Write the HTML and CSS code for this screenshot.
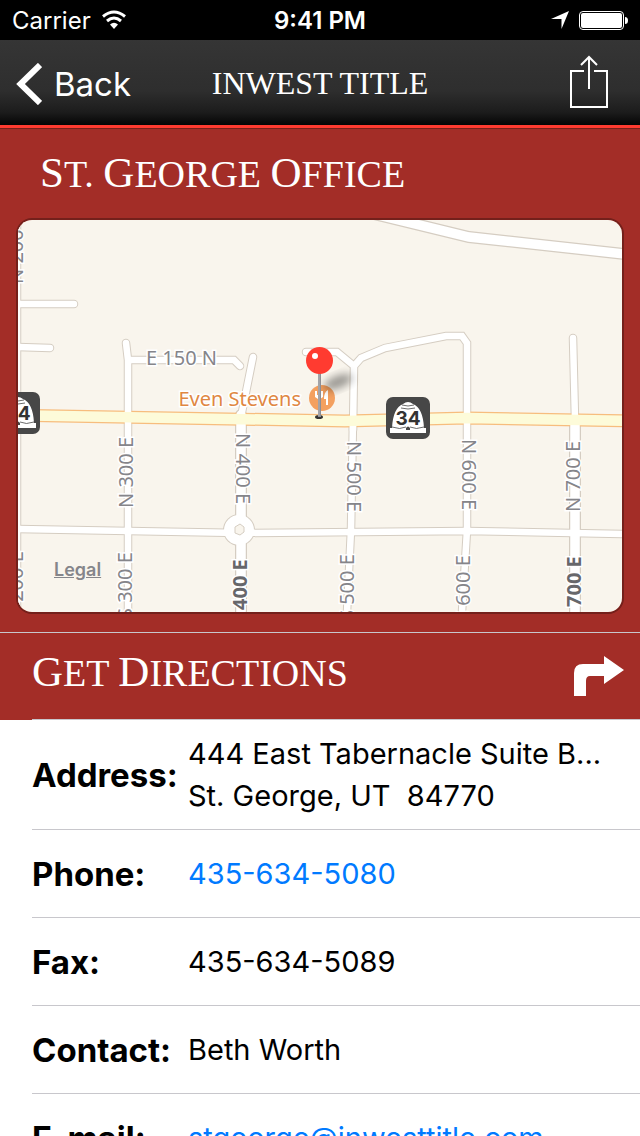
FILE: index.html
```html
<!DOCTYPE html>
<html lang="en">
<head>
    <meta charset="UTF-8">
    <meta name="viewport" content="width=device-width, initial-scale=1.0">
    <title>Inwest Title - St. George Office</title>
    <link rel="stylesheet" href="styles.css">
</head>
<body>
    <div class="status-bar">
        <div class="status-left">
            <span>Carrier</span>
            <svg class="wifi" width="26" height="20" viewBox="0 0 26 20">
                <path d="M2 6.500Q13 -2.500 24 6.500" fill="none" stroke="#fff" stroke-width="3"/>
                <path d="M6 11Q13 5 20 11" fill="none" stroke="#fff" stroke-width="3"/>
                <path d="M9 14.500Q13 11 17 14.500L13 19Z" fill="#fff"/>
            </svg>
        </div>
        <div class="status-time">9:41 PM</div>
        <div class="status-right">
            <svg width="18" height="18" viewBox="0 0 18 18">
                <path d="M18 0L10.500 18V8H0Z" fill="#fff"/>
            </svg>
            <svg width="49" height="19" viewBox="0 0 49 19">
                <rect x="0.500" y="0.500" width="44" height="18" rx="3.500" fill="none" stroke="#fff"/>
                <rect x="2" y="2" width="41" height="15" rx="2" fill="#fff"/>
                <path d="M46 6Q49 6 49 9.500Q49 13 46 13Z" fill="#fff"/>
            </svg>
        </div>
    </div>

    <header class="nav-bar">
        <button class="back-button" type="button">
            <svg width="26" height="42" viewBox="0 0 26 42">
                <path d="M24 2L4.500 21L24 40" fill="none" stroke="#fff" stroke-width="6"/>
            </svg>
            Back
        </button>
        <h1 class="nav-title">INWEST TITLE</h1>
        <button class="share-button" type="button" aria-label="Share">
            <svg width="38" height="54" viewBox="0 0 38 54">
                <path d="M14 16H1V52H37V16H24M19 34V2M11 10L19 2L27 10" fill="none" stroke="#fff" stroke-width="2"/>
            </svg>
        </button>
    </header>

    <main class="content">
        <section class="office">
            <h2 class="office-name"><span class="cap">S</span>t. <span class="cap">G</span>eorge <span class="cap">O</span>ffice</h2>
            <div class="map">
                <svg class="map-canvas" viewBox="18 220 604 392" preserveAspectRatio="xMidYMid slice">
                    <defs>
                        <g id="streets">
                            <path d="M17 220V612"/>
                            <path d="M15 304H74M15 347L50 348"/>
                            <path d="M126 343L128 360V612M128 360H234L240 366"/>
                            <path d="M253 357L242 412"/>
                            <path d="M306 352H337L354 366M353 430L354 366L361 358L385 348L446 336H462L467 343V530L462 612"/>
                            <path d="M353 420L351 530L347 612"/>
                            <path d="M573 338L575 420"/>
                            <path d="M15 529L240 533L467 531L622 534"/>
                        </g>
                        <g id="avenues">
                            <path d="M241 415L241 612M575 420V612"/>
                            <path d="M370 213L469 237L625 254"/>
                        </g>
                        <!-- state route 34 shield -->
                        <g id="shield">
                            <rect width="44" height="42" rx="7" fill="#474747"/>
                            <path d="M4 36V31H6Q7 11 17 7Q22 3 27 7Q37 11 38 31H40V36Z" fill="#fff"/>
                            <path d="M16 8Q22 10 28 8M15 11Q22 13 29 11M6 30Q14 33 20 30M24 30Q30 33 38 30" fill="none" stroke="#474747" stroke-width="0.800"/>
                            <path d="M20 33V31Q22 28 24 31V33Z" fill="#474747"/>
                        </g>
                        <filter id="blur" x="-50%" y="-50%" width="200%" height="200%">
                            <feGaussianBlur stdDeviation="4"/>
                        </filter>
                    </defs>

                    <rect x="18" y="220" width="604" height="392" fill="#f9f5ed"/>

                    <g fill="none" stroke-linecap="round">
                        <use href="#streets" stroke="#d5cdc2" stroke-width="8.500"/>
                        <use href="#avenues" stroke="#d5cdc2" stroke-width="12"/>
                        <circle cx="239" cy="530" r="16" fill="#d5cdc2"/>
                        <path d="M10 415L345 421L467 418L630 421" stroke="#f7bd7e" stroke-width="13"/>
                        <use href="#streets" stroke="#fff" stroke-width="6.500"/>
                        <use href="#avenues" stroke="#fff" stroke-width="9.500"/>
                        <circle cx="239" cy="530" r="15" fill="#fff"/>
                        <path d="M10 415L345 421L467 418L630 421" stroke="#fdfbd9" stroke-width="10.500"/>
                    </g>
                    <path d="M235 527L240 524L244 527V532L240 535L235 533Z" fill="#f9f5ed" stroke="#d5cdc2"/>

                    <g class="road-label">
                        <text x="146" y="365">E 150 N</text>
                        <text transform="translate(23 284) rotate(-90)">N 200 E</text>
                        <text transform="translate(23 618) rotate(-90)">S 200 E</text>
                        <text transform="translate(133 508) rotate(-90)">N 300 E</text>
                        <text transform="translate(132 619) rotate(-90)">S 300 E</text>
                        <text transform="translate(236 433) rotate(90)">N 400 E</text>
                        <text transform="translate(347 441) rotate(90)">N 500 E</text>
                        <text transform="translate(354 621) rotate(-90)">S 500 E</text>
                        <text transform="translate(462 439) rotate(90)">N 600 E</text>
                        <text transform="translate(470 622) rotate(-90)">S 600 E</text>
                        <text transform="translate(580 512) rotate(-90)">N 700 E</text>
                    </g>
                    <g class="road-label road-label-major">
                        <text transform="translate(247 610) rotate(-90)">400 E</text>
                        <text transform="translate(581 607) rotate(-90)">700 E</text>
                    </g>

                    <use href="#shield" x="-4" y="392"/>
                    <text class="shield-number" x="18" y="420">34</text>
                    <use href="#shield" x="386" y="397"/>
                    <text class="shield-number" x="408" y="425">34</text>

                    <!-- restaurant -->
                    <text class="place-label" x="301" y="406">Even Stevens</text>
                    <circle cx="322" cy="398" r="13" fill="#f3a060"/>
                    <path d="M315 391H317V395H318V391H320V395H321V391H323V397L320 399V406H318V399L315 397ZM328 390V405H326V399H324Q324 392 328 390Z" fill="#fff"/>

                    <!-- pin -->
                    <ellipse cx="338" cy="382" rx="15" ry="6" fill="#000" opacity="0.400" transform="rotate(-22 338 382)" filter="url(#blur)"/>
                    <ellipse cx="319" cy="417" rx="4" ry="2" fill="#333"/>
                    <path d="M319.500 372V417" stroke="#8e8e93" stroke-width="3"/>
                    <path d="M319 372V416" stroke="#b8b8bc"/>
                    <circle cx="319.500" cy="360.500" r="13.500" fill="#ff3b30"/>
                    <circle cx="315" cy="356" r="3" fill="#fff"/>
                </svg>
                <a class="map-legal" href="#">Legal</a>
            </div>
        </section>

        <a class="directions" href="#">
            <span class="directions-inner">
                <span class="directions-label"><span class="cap">G</span>et <span class="cap">D</span>irections</span>
                <svg width="50" height="40" viewBox="0 0 50 40">
                    <path d="M0 40V17Q0 8 9 8H30V0L50 14L30 28V20H16Q12 20 12 25V40Z" fill="#fff"/>
                </svg>
            </span>
        </a>

        <dl class="details">
            <div class="row row-address">
                <dt>Address:</dt>
                <dd>444 East Tabernacle Suite B...<br>St. George, UT&nbsp; 84770</dd>
            </div>
            <div class="row">
                <dt>Phone:</dt>
                <dd><a href="tel:435-634-5080">435-634-5080</a></dd>
            </div>
            <div class="row">
                <dt>Fax:</dt>
                <dd>435-634-5089</dd>
            </div>
            <div class="row">
                <dt>Contact:</dt>
                <dd>Beth Worth</dd>
            </div>
            <div class="row">
                <dt>E-mail:</dt>
                <dd><a href="mailto:stgeorge@inwesttitle.com">stgeorge@inwesttitle.com</a></dd>
            </div>
        </dl>
    </main>
</body>
</html>
```
FILE: styles.css
```css
* {
    box-sizing: border-box;
}

body {
    margin: 0;
    height: 100vh;
    display: flex;
    flex-direction: column;
    font-family: Inter, "Liberation Sans", sans-serif;
    background-color: #fff;
    color: #000;
}

svg {
    display: block;
    flex-shrink: 0;
}

button {
    padding: 0;
    border: none;
    background: none;
    color: inherit;
    font: inherit;
    cursor: pointer;
}

/* Status bar */
.status-bar {
    display: grid;
    grid-template-columns: 1fr auto 1fr;
    align-items: center;
    flex-shrink: 0;
    height: 40px;
    padding: 0 12px;
    background-color: #000;
    color: #fff;
    font-size: 24px;
}

.status-left,
.status-right {
    display: flex;
    align-items: center;
    gap: 10px;
}

.status-right {
    justify-content: flex-end;
}

.status-time {
    font-weight: 600;
}

/* Navigation bar */
.nav-bar {
    display: grid;
    grid-template-columns: 1fr auto 1fr;
    align-items: center;
    flex-shrink: 0;
    height: 88px;
    padding: 2px 16px 0;
    background: linear-gradient(#353535, #2e2e2e 60%, #1c1c1c 85%, #050505);
    border-bottom: 3px solid #ff3b30;
    color: #fff;
}

.back-button {
    display: flex;
    align-items: center;
    justify-self: start;
    gap: 12px;
    font-size: 33px;
}

.nav-title {
    margin: 0;
    font-family: "Liberation Serif", serif;
    font-size: 32px;
    font-weight: normal;
}

.share-button {
    justify-self: end;
    margin: 0 16px 4px 0;
}

.content {
    flex: 1;
    min-height: 0;
    overflow-y: auto;
    scrollbar-width: none;
}

/* Office name and map */
.office {
    padding: 16px;
    padding-bottom: 18px;
    background-color: #a32d27;
    border-top: 1px solid #74201b;
    color: #fff;
}

.office-name,
.directions-label {
    font-family: "Liberation Serif", serif;
    font-size: 38px;
    font-weight: normal;
    line-height: 56px;
    text-transform: uppercase;
}

.office-name {
    margin: 0 0 16px;
    padding-left: 24px;
}

.cap {
    font-size: 43px;
}

.map {
    position: relative;
    overflow: hidden;
    border: 2px solid #74201b;
    border-radius: 16px;
}

.map-canvas {
    width: 100%;
    height: auto;
}

.road-label {
    fill: #85858a;
    stroke: #fff;
    stroke-width: 3px;
    paint-order: stroke;
    font-family: "Noto Sans", sans-serif;
    font-size: 20px;
}

.road-label-major {
    fill: #67676b;
    font-weight: 700;
}

.place-label {
    fill: #e08742;
    stroke: #fff;
    stroke-width: 3px;
    paint-order: stroke;
    font-family: "Noto Sans", sans-serif;
    font-size: 20px;
    text-anchor: end;
}

.shield-number {
    fill: #333;
    stroke: #fff;
    stroke-width: 2px;
    paint-order: stroke;
    font-size: 19px;
    font-weight: 700;
    text-anchor: middle;
}

.map-legal {
    position: absolute;
    left: 36px;
    bottom: 32px;
    color: #85858a;
    font-size: 18px;
    font-weight: 600;
}

/* Directions */
.directions {
    display: block;
    padding-left: 32px;
    background-color: #a32d27;
    border-top: 1px solid #c8c7cc;
    color: #fff;
    text-decoration: none;
}

.directions-inner {
    display: flex;
    align-items: center;
    justify-content: space-between;
    height: 87px;
    padding-right: 16px;
    border-bottom: 1px solid #c8c7cc;
}

.directions-label {
    padding-bottom: 8px;
}

/* Contact details */
.details {
    margin: 0;
    padding-left: 32px;
}

.row {
    display: flex;
    align-items: center;
    min-height: 88px;
    border-bottom: 1px solid #c8c7cc;
}

.row-address {
    min-height: 110px;
}

.row dt {
    flex: 0 0 156px;
    font-size: 33px;
    font-weight: 700;
}

.row dd {
    margin: 0;
    font-size: 29px;
    line-height: 42px;
    white-space: nowrap;
}

.row a {
    color: #007aff;
    text-decoration: none;
}
```
